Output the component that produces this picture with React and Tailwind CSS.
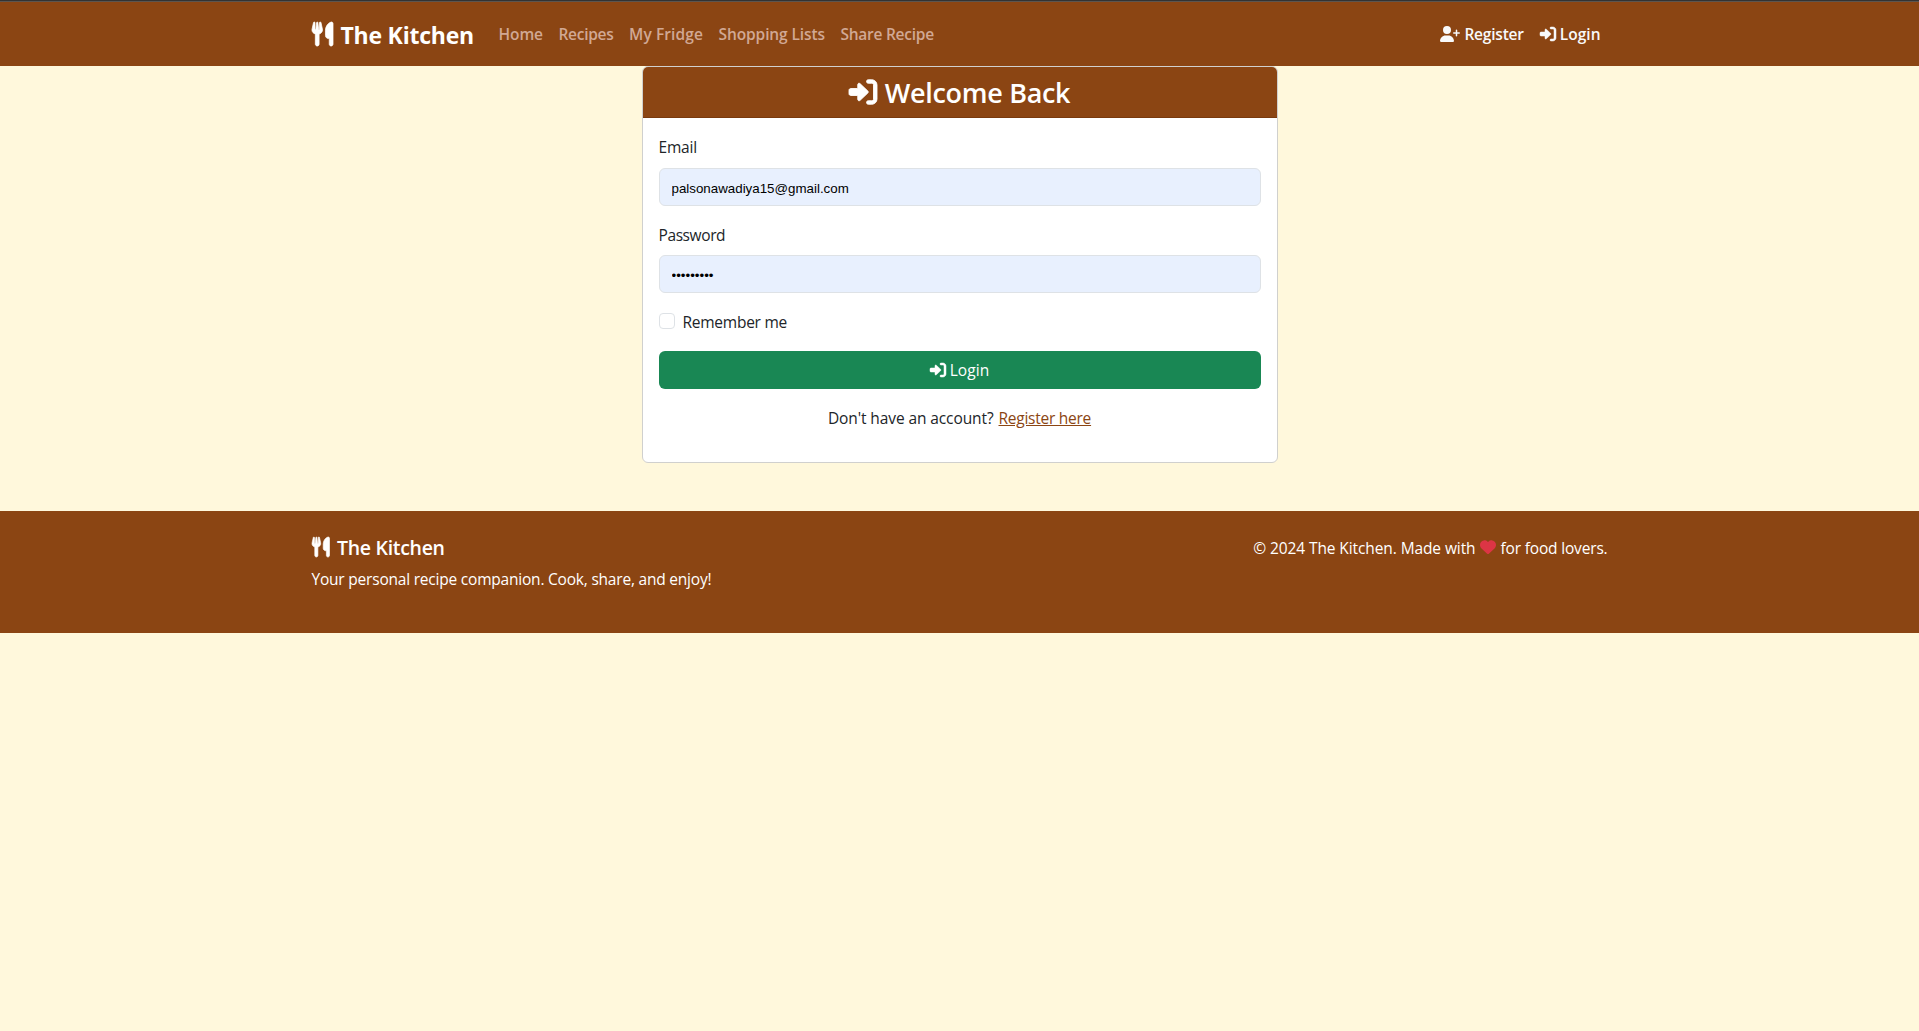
import { FaUserPlus, FaHeart } from 'react-icons/fa6';

const links = [
  { label: 'Home', style: 'w-[44px] tracking-[-0.1px]' },
  { label: 'Recipes', style: 'w-[54.5px] tracking-[-0.3px]' },
  { label: 'My Fridge', style: 'w-[73.5px] tracking-[0.1px]' },
  { label: 'Shopping Lists', style: 'w-[106px] tracking-[-0.1px]' },
  { label: 'Share Recipe', style: 'w-[94px] tracking-[-0.26px]' },
];

function Utensils({ className }) {
  return (
    <svg viewBox="0 0 448 512" fill="currentColor" stroke="currentColor" strokeWidth="16" className={`overflow-visible ${className}`}>
      <path d="M221.6 148.7C224.7 161.3 224.8 174.5 222.1 187.2C219.3 200 213.1 211.1 204.6 222C191.6 238.6 173 250.1 151.1 254.1V472C151.1 482.6 147.8 492.8 140.3 500.3C132.8 507.8 122.6 512 111.1 512C101.4 512 91.22 507.8 83.71 500.3C76.21 492.8 71.1 482.6 71.1 472V254.1C50.96 250.1 31.96 238.9 18.3 222.4C10.19 212.2 4.529 200.3 1.755 187.5C-1.019 174.7-.8315 161.5 2.303 148.8L32.51 12.45C33.36 8.598 35.61 5.197 38.82 2.9C42.02 .602 45.97-.4297 49.89 .0026C53.82 .4302 57.46 2.303 60.1 5.259C62.74 8.214 64.18 12.04 64.16 16V160H81.53L98.62 11.91C99.02 8.635 100.6 5.621 103.1 3.434C105.5 1.248 108.7 .0401 111.1 .0401C115.3 .0401 118.5 1.248 120.9 3.434C123.4 5.621 124.1 8.635 125.4 11.91L142.5 160H159.1V16C159.1 12.07 161.4 8.268 163.1 5.317C166.6 2.366 170.2 .474 174.1 .0026C178-.4262 181.1 .619 185.2 2.936C188.4 5.253 190.6 8.677 191.5 12.55L221.6 148.7zM448 472C448 482.6 443.8 492.8 436.3 500.3C428.8 507.8 418.6 512 408 512C397.4 512 387.2 507.8 379.7 500.3C372.2 492.8 368 482.6 368 472V352H351.2C342.8 352 334.4 350.3 326.6 347.1C318.9 343.8 311.8 339.1 305.8 333.1C299.9 327.1 295.1 320 291.9 312.2C288.8 304.4 287.2 296 287.2 287.6L287.1 173.8C288 136.9 299.1 100.8 319.8 70.28C340.5 39.71 369.8 16.05 404.1 2.339C408.1 .401 414.2-.3202 419.4 .2391C424.6 .7982 429.6 2.62 433.9 5.546C438.2 8.472 441.8 12.41 444.2 17.03C446.7 21.64 447.1 26.78 448 32V472z" />
    </svg>
  );
}

function SignIn({ className }) {
  return (
    <svg viewBox="0 0 512 512" fill="currentColor" stroke="currentColor" strokeWidth="16" className={`overflow-visible ${className}`}>
      <path d="M344.7 238.5l-144.1-136C193.7 95.97 183.4 94.17 174.6 97.95C165.8 101.8 160.1 110.4 160.1 120V192H32.02C14.33 192 0 206.3 0 224v64c0 17.68 14.33 32 32.02 32h128.1v72c0 9.578 5.707 18.25 14.51 22.05c8.803 3.781 19.03 1.984 26-4.594l144.1-136C354.3 264.4 354.3 247.6 344.7 238.5zM416 32h-64c-17.67 0-32 14.33-32 32s14.33 32 32 32h64c17.67 0 32 14.33 32 32v256c0 17.67-14.33 32-32 32h-64c-17.67 0-32 14.33-32 32s14.33 32 32 32h64c53.02 0 96-42.98 96-96V128C512 74.98 469 32 416 32z" />
    </svg>
  );
}

function Navbar() {
  return (
    <header className="h-[66px] border-t border-[#333333] bg-[#8b4513]">
      <div className="border-t border-[#5c554f]">
        <div className="mx-auto flex h-[64px] w-[1296px] items-center">
          <a href="#" className="flex w-[187px] shrink-0 items-center text-[23px] font-bold leading-9 text-white">
            <Utensils className="h-6 w-[21px]" />
            <span className="ml-2 mt-[2px] tracking-[-0.22px]">The Kitchen</span>
          </a>
          <nav className="flex gap-4 text-[15.5px] font-semibold leading-6 text-[#d1a894]">
            {links.map((l) => (
              <a key={l.label} href="#" className={`shrink-0 whitespace-nowrap ${l.style}`}>
                {l.label}
              </a>
            ))}
          </nav>
          <div className="ml-auto flex gap-4 pr-[7px] text-[15.5px] font-semibold leading-6 text-[#f8f9fa]">
            <a href="#" className="flex items-center">
              <FaUserPlus className="h-4 w-5" />
              <span className="ml-1 tracking-[-0.2px]">Register</span>
            </a>
            <a href="#" className="flex items-center">
              <SignIn className="size-4" />
              <span className="ml-1 tracking-[0px]">Login</span>
            </a>
          </div>
        </div>
      </div>
    </header>
  );
}

function LoginCard() {
  const field =
    'block h-[38px] w-full rounded-md border border-[#dee2e6] bg-[#e8f0fe] px-3 pt-[2px] text-[13.333px] text-black font-["Liberation_Sans",sans-serif] outline-none';
  return (
    <section className="mx-auto h-[397px] w-[636px] rounded-md border border-[#d0d0ce] bg-white text-[15.5px] leading-6 text-[#212529]">
      <h1 className="flex h-[51px] items-center justify-center rounded-t-[5px] border-b border-[#793a0e] bg-[#8b4513] text-[27px] font-semibold leading-8 text-white">
        <SignIn className="size-7" />
        <span className="ml-2 mt-px tracking-[-0.3px]">Welcome Back</span>
      </h1>
      <form className="px-4 pt-[17px]">
        <label htmlFor="email" className="block tracking-[-0.2px]">Email</label>
        <input id="email" type="text" readOnly value="palsonawadiya15@gmail.com" className={`mt-[9px] ${field}`} />
        <label htmlFor="password" className="mt-[17px] block tracking-[-0.4px]">Password</label>
        <input id="password" type="password" readOnly value="password1" className={`mt-[8px] ${field}`} />
        <div className="mt-[17px] flex">
          <input type="checkbox" id="remember" className="mt-[3px] size-4 appearance-none rounded border border-[#dee2e6] bg-white" />
          <label htmlFor="remember" className="ml-2 tracking-[-0.25px]">Remember me</label>
        </div>
        <button type="button" className="mt-[17px] flex h-[38px] w-full items-center justify-center rounded-md bg-[#198754] text-white">
          <SignIn className="size-4" />
          <span className="ml-1 tracking-[0.1px]">Login</span>
        </button>
      </form>
      <p className="mt-[17px] flex justify-center">
        <span className="tracking-[-0.1px]">Don't have an account?</span>
        <a href="#" className="ml-[5px] tracking-[-0.25px] text-[#8b4513] underline">Register here</a>
      </p>
    </section>
  );
}

function Footer() {
  return (
    <footer className="mt-12 h-[122px] bg-[#8b4513] pt-6 text-[15.5px] leading-6 text-white">
      <div className="mx-auto flex w-[1296px] items-start justify-between">
        <div>
          <h2 className="flex h-6 items-center text-[19.5px] font-semibold">
            <Utensils className="h-5 w-[17.5px]" />
            <span className="ml-2 mt-px tracking-[-0.3px]">The Kitchen</span>
          </h2>
          <p className="mt-2 tracking-[-0.21px]">Your personal recipe companion. Cook, share, and enjoy!</p>
        </div>
        <p className="mt-px flex items-center">
          <span className="tracking-[-0.1px]">© 2024 The Kitchen. Made with</span>
          <FaHeart className="ml-[5px] mr-1 mb-[2px] size-4 text-[#dc3545]" />
          <span className="tracking-[-0.17px]">for food lovers.</span>
        </p>
      </div>
    </footer>
  );
}

export default function App() {
  return (
    <div className='min-h-screen bg-[#fff8dc] font-["Open_Sans","Noto_Sans",sans-serif]'>
      <Navbar />
      <LoginCard />
      <Footer />
    </div>
  );
}
